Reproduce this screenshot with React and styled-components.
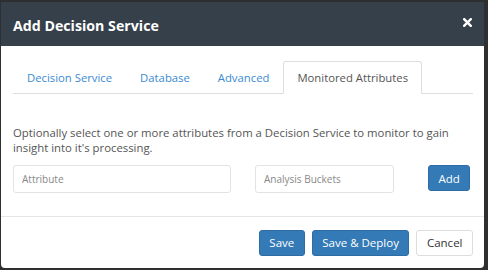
import React from 'react';
import styled, { createGlobalStyle } from 'styled-components';

const GlobalStyle = createGlobalStyle`
    html, body {
        margin: 0;
        padding: 0;
        background: #2e2f31;
        font-family: "Open Sans", "Liberation Sans", sans-serif;
    }
`;

const App = () => {
    return (
        <>
            <GlobalStyle />
            <Modal>
                <Header>
                    <h1>Add Decision Service</h1>
                    <Close aria-label="close">
                        <svg width="9" height="9" viewBox="0 0 9 9">
                            <path d="M1.2 1.2 L7.8 7.8 M7.8 1.2 L1.2 7.8" stroke="#fff" strokeWidth="2.4" strokeLinecap="square" />
                        </svg>
                    </Close>
                </Header>
                <Body>
                    <Tabs>
                        <Tab>Decision Service</Tab>
                        <Tab>Database</Tab>
                        <Tab>Advanced</Tab>
                        <Tab $active>Monitored Attributes</Tab>
                    </Tabs>
                    <Help>
                        Optionally select one or more attributes from a Decision Service to monitor to gain
                        insight into it's processing.
                    </Help>
                    <Row>
                        <Input $width="218px" placeholder="Attribute" />
                        <Input $width="139px" placeholder="Analysis Buckets" />
                        <Button $primary className="add">Add</Button>
                    </Row>
                </Body>
                <Footer>
                    <Button $primary>Save</Button>
                    <Button $primary>Save &amp; Deploy</Button>
                    <Button>Cancel</Button>
                </Footer>
            </Modal>
        </>
    );
};

export default App;

const Modal = styled.div`
    margin: 2px 4px 0 1px;
    height: 266px;
    background: #fff;
    border-radius: 0 0 4px 4px;
    display: flex;
    flex-direction: column;
    overflow: hidden;
`;

const Header = styled.div`
    height: 44px;
    background: #36404a;
    display: flex;
    align-items: center;
    justify-content: space-between;
    padding: 0 12px 0 12px;

    h1 {
        margin: 2px 0 0;
        color: #fff;
        font-size: 14.2px;
        font-weight: 700;
    }
`;

const Close = styled.span`
    display: flex;
    margin: -4px 0 0 0;
`;

const Body = styled.div`
    padding: 15px 11px 0 12px;
    flex: 1;
    border-bottom: 1px solid #e5e5e5;
`;

const Tabs = styled.div`
    display: flex;
    border-bottom: 1px solid #ddd;
    height: 32px;
`;

const Tab = styled.div`
    padding: 0 13px;
    margin-bottom: -1px;
    display: flex;
    align-items: center;
    font-size: 11.3px;
    color: ${p => (p.$active ? '#555' : '#3a8ad2')};
    border: 1px solid ${p => (p.$active ? '#ddd' : 'transparent')};
    border-bottom-color: ${p => (p.$active ? '#fff' : 'transparent')};
    border-radius: 3px 3px 0 0;
    background: ${p => (p.$active ? '#fff' : 'transparent')};
`;

const Help = styled.p`
    margin: 31px 0 0;
    font-size: 11.35px;
    line-height: 15px;
    color: #555;
`;

const Row = styled.div`
    display: flex;
    align-items: flex-start;
    margin-top: 10px;
    gap: 24px;

    .add {
        margin-left: 10px;
    }
`;

const Input = styled.input`
    width: ${p => p.$width};
    box-sizing: border-box;
    height: 28px;
    padding: 0 8px;
    border: 1px solid #e3e3e3;
    border-radius: 3px;
    font-family: inherit;
    font-size: 10px;
    color: #555;

    &::placeholder {
        color: #888;
    }
`;

const Button = styled.button`
    height: 26px;
    padding: 0 9.5px;
    border-radius: 3px;
    font-family: inherit;
    font-size: 11.5px;
    border: 1px solid ${p => (p.$primary ? '#2e6da4' : '#ddd')};
    background: ${p => (p.$primary ? '#337ab7' : '#fff')};
    color: ${p => (p.$primary ? '#fff' : '#333')};
`;

const Footer = styled.div`
    height: 51px;
    display: flex;
    justify-content: flex-end;
    align-items: center;
    gap: 7px;
    padding: 0 11px 0 0;
`;
